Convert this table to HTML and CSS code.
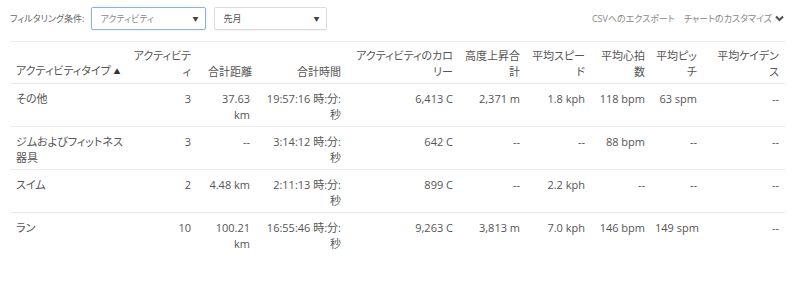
FILE: index.html
```html
<!DOCTYPE html>
<html lang="ja">
<head>
<meta charset="utf-8">
<link rel="stylesheet" href="styles.css">
</head>
<body>
<div class="toolbar">
  <div class="filters">
    <span class="filter-label">フィルタリング条件:</span>
    <div class="select select-focus"><span class="select-text placeholder">アクティビティ</span><span class="caret">▼</span></div>
    <div class="select"><span class="select-text">先月</span><span class="caret">▼</span></div>
  </div>
  <div class="links">
    <a class="link">CSVへのエクスポート</a>
    <a class="link">チャートのカスタマイズ<svg class="chev" width="9" height="7" viewBox="0 0 9 7"><polyline points="1,1.5 4.5,5 8,1.5" fill="none" stroke="#555" stroke-width="2.2"/></svg></a>
  </div>
</div>
<table class="stats">
  <colgroup>
    <col class="c1"><col class="c2"><col class="c3"><col class="c4"><col class="c5"><col class="c6"><col class="c7"><col class="c8"><col class="c9"><col class="c10">
  </colgroup>
  <thead>
    <tr>
      <th class="left">アクティビティタイプ <span class="sort">▲</span></th>
      <th class="count">アクティビティ</th>
      <th class="dist nowrap">合計距離</th>
      <th class="time">合計時間</th>
      <th>アクティビティのカロリー</th>
      <th>高度上昇合計</th>
      <th>平均スピード</th>
      <th>平均心拍数</th>
      <th class="pitch-head">平均ピッチ</th>
      <th>平均ケイデンス</th>
    </tr>
  </thead>
  <tbody>
    <tr>
      <td class="left">その他</td>
      <td class="count">3</td>
      <td class="dist">37.63 km</td>
      <td class="time">19:57:16 時:分:秒</td>
      <td>6,413 C</td>
      <td>2,371 m</td>
      <td>1.8 kph</td>
      <td>118 bpm</td>
      <td class="pitch">63 spm</td>
      <td>--</td>
    </tr>
    <tr>
      <td class="left">ジムおよびフィットネス器具</td>
      <td class="count">3</td>
      <td class="dist">--</td>
      <td class="time">3:14:12 時:分:秒</td>
      <td>642 C</td>
      <td>--</td>
      <td>--</td>
      <td>88 bpm</td>
      <td class="pitch">--</td>
      <td>--</td>
    </tr>
    <tr>
      <td class="left">スイム</td>
      <td class="count">2</td>
      <td class="dist">4.48 km</td>
      <td class="time">2:11:13 時:分:秒</td>
      <td>899 C</td>
      <td>--</td>
      <td>2.2 kph</td>
      <td>--</td>
      <td class="pitch">--</td>
      <td>--</td>
    </tr>
    <tr>
      <td class="left">ラン</td>
      <td class="count">10</td>
      <td class="dist">100.21 km</td>
      <td class="time">16:55:46 時:分:秒</td>
      <td>9,263 C</td>
      <td>3,813 m</td>
      <td>7.0 kph</td>
      <td>146 bpm</td>
      <td class="pitch">149 spm</td>
      <td>--</td>
    </tr>
  </tbody>
</table>
</body>
</html>
```
FILE: styles.css
```css
html, body {
  margin: 0;
  padding: 0;
  background: #ffffff;
}
body {
  font-family: "Open Sans", "Noto Sans CJK JP", sans-serif;
  font-feature-settings: "palt";
  color: #555555;
  font-size: 11px;
}
.toolbar {
  box-sizing: border-box;
  height: 41px;
  padding: 7px 16px 0 10px;
  display: flex;
  justify-content: space-between;
  align-items: flex-start;
}
.filters {
  display: flex;
  align-items: center;
}
.filter-label {
  font-size: 9px;
  color: #666666;
  margin-right: 7px;
}
.select {
  box-sizing: border-box;
  width: 113px;
  height: 23px;
  border: 1px solid #dcdcdc;
  border-radius: 2px;
  box-shadow: 0 1px 2px rgba(0,0,0,0.06);
  display: flex;
  align-items: center;
  justify-content: space-between;
  padding: 0 7px 0 8px;
  margin-right: 8px;
  font-size: 9px;
  color: #555555;
}
.select-focus {
  width: 115px;
  border-color: #8fb4dc;
  box-shadow: 0 0 2px rgba(100,150,210,0.35);
}
.placeholder {
  color: #8a8a8a;
}
.caret {
  font-size: 6px;
  color: #444444;
}
.links {
  display: flex;
  align-items: center;
  height: 23px;
  font-size: 9px;
  color: #888888;
}
.link {
  margin-left: 9px;
  display: flex;
  align-items: center;
}
.chev {
  margin-left: 3px;
}
.stats {
  margin: 0 15px 0 10px;
  width: 775px;
  table-layout: fixed;
  border-collapse: collapse;
  border-top: 1px solid #ececec;
}
.c1 { width: 120px; }
.c2 { width: 67px; }
.c3 { width: 59px; }
.c4 { width: 91px; }
.c5 { width: 112px; }
.c6 { width: 67px; }
.c7 { width: 65px; }
.c8 { width: 60px; }
.c9 { width: 52px; }
.c10 { width: 82px; }
.stats th {
  font-weight: normal;
  text-align: right;
  vertical-align: bottom;
  line-height: 16px;
  line-break: loose;
  padding: 6px 6px 3px 6px;
  color: #555555;
  border-bottom: 1px solid #ececec;
}
.stats td {
  text-align: right;
  vertical-align: top;
  line-height: 16px;
  padding: 7px 6px 3px 6px;
  border-bottom: 1px solid #ececec;
}
.stats tbody tr:last-child td {
  border-bottom: none;
}
.stats .left {
  text-align: left;
  padding-right: 0;
}
.stats .count {
  padding-left: 3px;
}
.stats .dist {
  padding-left: 11px;
}
.stats .nowrap {
  white-space: nowrap;
}
.stats .time {
  padding-left: 10px;
}
.stats .pitch-head {
  padding-left: 5px;
  line-break: anywhere;
}
.stats .pitch {
  padding-left: 4px;
  white-space: nowrap;
}
.sort {
  font-size: 7px;
  color: #333333;
  vertical-align: 1px;
}
```
